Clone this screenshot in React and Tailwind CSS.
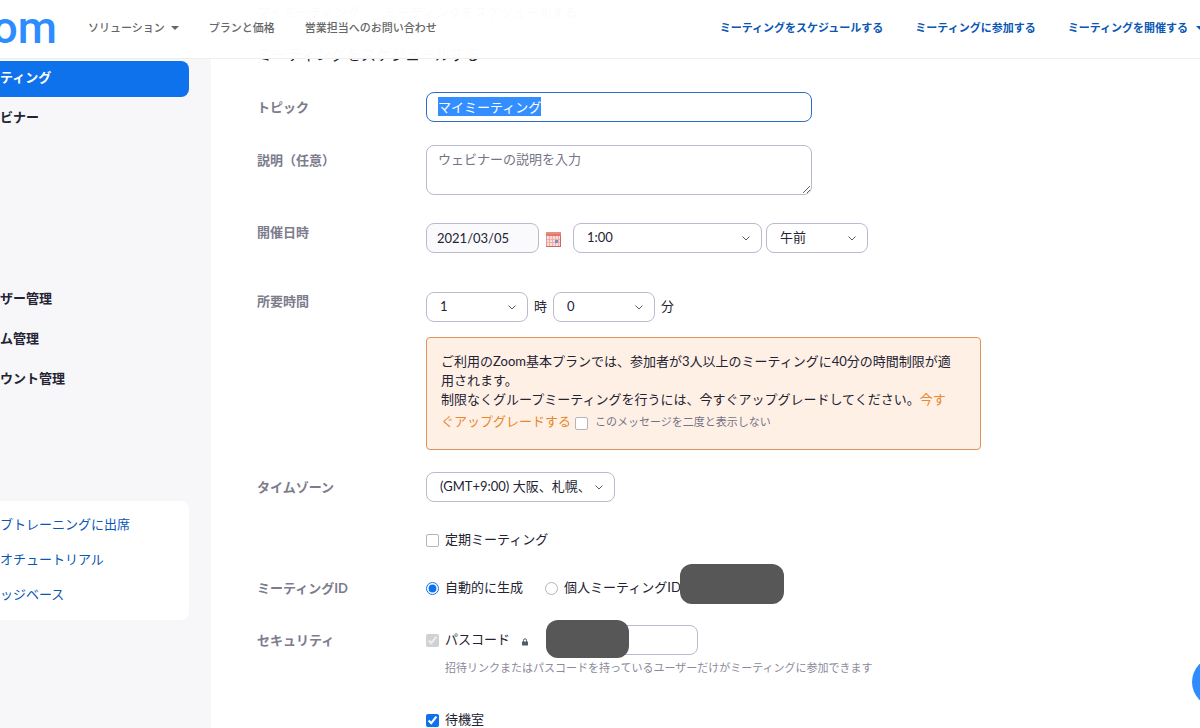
import React, { useEffect, useRef } from 'react';

const NAV_ACTIONS = ['ミーティングをスケジュールする', 'ミーティングに参加する'];
const ADMIN_LINKS = ['ザー管理', 'ム管理', 'ウント管理'];
const HELP_LINKS = ['ブトレーニングに出席', 'オチュートリアル', 'ッジベース'];

const Caret = () => (
  <svg width="8" height="4" viewBox="0 0 8 4" fill="currentColor" className="shrink-0">
    <path d="M0 0h8L4 4z" />
  </svg>
);

const CalendarIcon = () => (
  <svg width="15" height="15" viewBox="0 0 15 15">
    <rect width="15" height="15" fill="#f7dcd9" />
    <rect width="15" height="4" fill="#e0786d" />
    <path d="M0 1h15" stroke="#eba49c" />
    <path d="M1 7.5h13M1 10.5h13M3.5 4v10M6.5 4v10M9.5 4v10M12.5 4v10" stroke="#eeb0aa" />
    <path d="M0.5 4v11" stroke="#e39a93" />
    <path d="M0 14.5h15M14.5 4v11" stroke="#cc6a62" />
    <rect x="9" y="8" width="3" height="3" fill="#8a86c4" />
  </svg>
);

const LockIcon = () => (
  <svg width="6" height="8" viewBox="0 0 6 8" className="mt-1">
    <path d="M1.5 4V2.3a1.5 1.5 0 0 1 3 0V4" fill="none" stroke="#555b6e" />
    <rect y="3.5" width="6" height="4" rx="0.5" fill="#555b6e" />
  </svg>
);

// unchecked boxes get a light frame, checked ones stay native
const Check = ({ type = 'checkbox', className = '', ...props }) => (
  <input
    type={type}
    className={`size-[13px] appearance-none border border-[#b4b4bd] bg-white accent-[#0e72ed] checked:appearance-auto ${
      type === 'radio' ? 'rounded-full' : 'rounded-xs'
    } ${className}`}
    {...props}
  />
);

const Select = ({ label, value, className }) => (
  <span className={`relative inline-block ${className}`}>
    <select
      aria-label={label}
      defaultValue={value}
      className="h-[30px] w-full appearance-none rounded-lg border border-[#babacc] bg-white pl-[13px] pr-7 text-[#232333]"
    >
      <option>{value}</option>
    </select>
    <svg
      width="8"
      height="5"
      viewBox="0 0 8 5"
      className="pointer-events-none absolute right-3 top-[13px]"
      fill="none"
      stroke="#5c5c6e"
    >
      <path d="M0.5 0.5 4 4l3.5-3.5" />
    </svg>
  </span>
);

const Row = ({ label, htmlFor, labelClass = 'leading-[30px]', className, children }) => (
  <div className={`flex ${className}`}>
    <label htmlFor={htmlFor} className={`w-[169px] shrink-0 font-bold text-[#7c7c8c] ${labelClass}`}>
      {label}
    </label>
    <div className="min-w-0 flex-1">{children}</div>
  </div>
);

const Header = () => (
  <header className="absolute inset-x-0 top-0 z-10 flex h-[59px] items-center overflow-hidden whitespace-nowrap border-b border-[#efeff2] bg-white/98 pb-[2px] text-[11px] font-medium">
    <a href="#" className="flex w-[57px] shrink-0 justify-end font-[Roboto] text-[45px] leading-[54px] text-[#2d8cff]">
      om
    </a>
    <nav className="ml-[31px] flex gap-[30px] text-[#666]">
      <a href="#" className="flex items-center gap-[6px]">
        ソリューション <Caret />
      </a>
      <a href="#">プランと価格</a>
      <a href="#">営業担当へのお問い合わせ</a>
    </nav>
    <nav className="-mr-1 ml-auto flex gap-8 font-bold text-[#0956b5]">
      {NAV_ACTIONS.map((text) => (
        <a key={text} href="#">{text}</a>
      ))}
      <a href="#" className="flex items-center gap-2">
        ミーティングを開催する <Caret />
      </a>
    </nav>
  </header>
);

const Sidebar = () => (
  <aside className="w-[211px] shrink-0 bg-[#f7f7fa] pr-[22px] pt-[61px]">
    <nav className="flex flex-col gap-1 font-bold leading-8 text-[#232333]">
      <a href="#" className="h-9 rounded-r-lg bg-[#0e72ed] text-white">ティング</a>
      <a href="#" className="h-9">ビナー</a>
    </nav>
    <nav className="mt-[145px] flex flex-col gap-1 font-bold leading-8 text-[#232333]">
      {ADMIN_LINKS.map((text) => (
        <a key={text} href="#" className="h-9">{text}</a>
      ))}
    </nav>
    <nav className="mt-[103px] flex flex-col rounded-r-lg bg-white py-[7px] leading-8 text-[#0956b5]">
      {HELP_LINKS.map((text) => (
        <a key={text} href="#" className="h-[35px]">{text}</a>
      ))}
    </nav>
  </aside>
);

const UpgradeNotice = () => (
  <div className="mt-[15px] max-w-[555px] rounded-sm border border-[#e0935a] bg-[#fff0e6] pb-[18px] pl-[14px] pr-6 pt-[14px] leading-[19px]">
    <p>ご利用のZoom基本プランでは、参加者が3人以上のミーティングに40分の時間制限が適用されます。</p>
    <p>
      制限なくグループミーティングを行うには、今すぐアップグレードしてください。
      <a href="#" className="text-[#e8872b]">今すぐアップグレードする</a>
      <Check id="hide-notice" className="ml-1 mt-2 align-[-4px]" />
      <label htmlFor="hide-notice" className="ml-[7px] text-[11px] text-[#747487]">
        このメッセージを二度と表示しない
      </label>
    </p>
  </div>
);

const ScheduleForm = () => {
  const topicRef = useRef(null);

  useEffect(() => {
    topicRef.current.focus();
    topicRef.current.select();
  }, []);

  return (
    <form>
      <Row label="トピック" htmlFor="topic" className="mt-[26px]">
        <input
          id="topic"
          ref={topicRef}
          type="text"
          defaultValue="マイミーティング"
          className="block h-[30px] w-full max-w-[386px] rounded-lg border border-[#2a6fc4] px-[11px] pb-[2px] outline-none selection:bg-[#338fff] selection:text-white"
        />
      </Row>

      <Row label="説明（任意）" htmlFor="description" className="mt-[23px]">
        <textarea
          id="description"
          placeholder="ウェビナーの説明を入力"
          className="block h-[50px] w-full max-w-[386px] rounded-lg border border-[#babacc] px-[11px] py-[3px] leading-5 placeholder:text-[#747487]"
        />
      </Row>

      <Row label="開催日時" htmlFor="date" labelClass="leading-[18px]" className="mt-7">
        <div className="flex items-center">
          <input
            id="date"
            type="text"
            defaultValue="2021/03/05"
            className="h-[30px] w-[113px] rounded-lg border border-[#babacc] bg-[#fafafc] px-[10px]"
          />
          <button type="button" aria-label="日付を選択" className="ml-[7px] mr-3 pt-[2px]">
            <CalendarIcon />
          </button>
          <Select label="時刻" value="1:00" className="mr-1 w-[189px]" />
          <Select label="午前または午後" value="午前" className="w-[102px]" />
        </div>
      </Row>

      <Row label="所要時間" labelClass="leading-[18px]" className="mt-[39px]">
        <div className="flex items-center gap-[6px]">
          <Select label="時" value="1" className="w-[102px]" />
          <span>時</span>
          <Select label="分" value="0" className="w-[102px]" />
          <span>分</span>
        </div>
        <UpgradeNotice />
      </Row>

      <Row label="タイムゾーン" className="mt-[22px]">
        <Select label="タイムゾーン" value="(GMT+9:00) 大阪、札幌、" className="block w-[189px]" />
        <div className="mt-7 flex h-5 items-center gap-[6px]">
          <Check id="recurring" />
          <label htmlFor="recurring">定期ミーティング</label>
        </div>
      </Row>

      <Row label="ミーティングID" labelClass="leading-5" className="mt-7">
        <div className="relative flex h-5 items-center gap-[6px]">
          <Check type="radio" id="id-auto" name="meeting-id" defaultChecked />
          <label htmlFor="id-auto" className="mr-4">自動的に生成</label>
          <Check type="radio" id="id-personal" name="meeting-id" />
          <label htmlFor="id-personal">個人ミーティングID</label>
          <span className="absolute -top-[14px] left-[254px] h-10 w-[104px] rounded-xl bg-[#575757]" />
        </div>
      </Row>

      <Row label="セキュリティ" className="mt-[27px]">
        <div className="flex items-center gap-[6px]">
          <Check id="passcode-on" defaultChecked disabled />
          <label htmlFor="passcode-on" className="mr-[6px]">パスコード</label>
          <LockIcon />
          <span className="relative ml-3">
            <input
              type="text"
              aria-label="パスコード"
              className="block h-[30px] w-[152px] rounded-lg border border-[#babacc]"
            />
            <span className="absolute -top-[5px] left-0 h-[38px] w-[83px] rounded-xl bg-[#575757]" />
          </span>
        </div>
        <p className="mt-[3px] pl-[19px] text-[11px] leading-5 text-[#8a8a9a]">
          招待リンクまたはパスコードを持っているユーザーだけがミーティングに参加できます
        </p>
        <div className="mt-8 flex h-5 items-center gap-[6px]">
          <Check id="waiting-room" defaultChecked />
          <label htmlFor="waiting-room">待機室</label>
        </div>
      </Row>
    </form>
  );
};

export default function App() {
  return (
    <div className="relative flex h-screen overflow-hidden bg-white font-[Lato,'Noto_Sans_CJK_JP',sans-serif] text-[13px] text-[#232333]">
      <Header />
      <Sidebar />
      <main className="min-w-0 flex-1 overflow-hidden pl-[46px] pr-4 pt-[2px]">
        <p className="flex gap-6 leading-5">
          <a href="#">マイミーティング</a>
          <span>ミーティングをスケジュールする</span>
        </p>
        <h1 className="mt-5 text-[15px] leading-6">ミーティングをスケジュールする</h1>
        <ScheduleForm />
      </main>
      <button
        type="button"
        aria-label="チャット"
        className="absolute -right-[42px] bottom-[21px] size-[50px] rounded-full bg-[#2d8cff]"
      />
    </div>
  );
}
